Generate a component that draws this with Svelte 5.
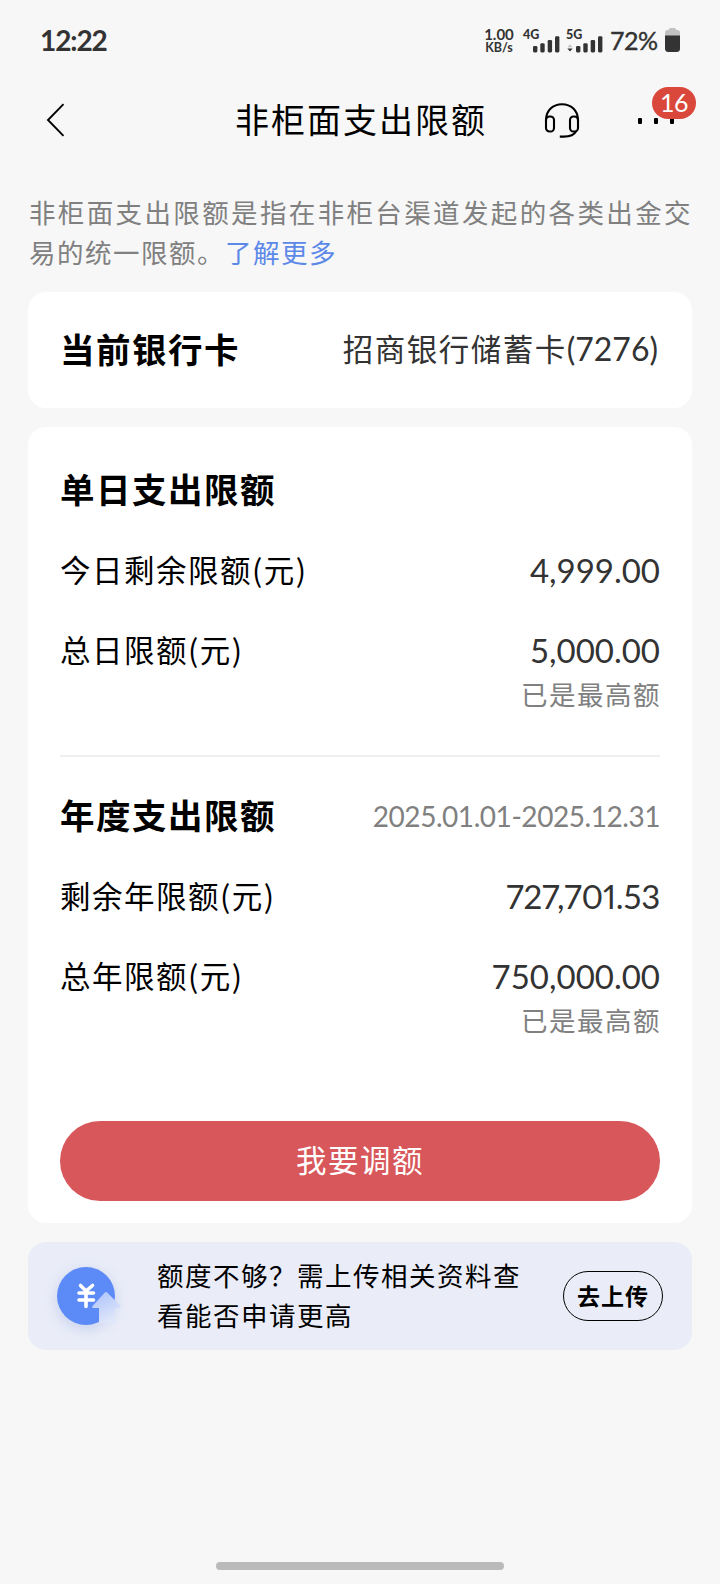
<script lang="ts">
	type Row = { label: string; value: string; note?: string; tight?: boolean };
	type Section = { title: string; period?: string; rows: Row[] };

	const sections: Section[] = [
		{
			title: '单日支出限额',
			rows: [
				{ label: '今日剩余限额(元)', value: '4,999.00' },
				{ label: '总日限额(元)', value: '5,000.00', note: '已是最高额' },
			],
		},
		{
			title: '年度支出限额',
			period: '2025.01.01-2025.12.31',
			rows: [
				{ label: '剩余年限额(元)', value: '727,701.53', tight: true },
				{ label: '总年限额(元)', value: '750,000.00', note: '已是最高额' },
			],
		},
	];

	let unread = $state(16);
</script>

{#snippet bars()}
	<svg class="bars" width="27" height="17" viewBox="0 0 27 17">
		<rect x="0" y="10" width="4.4" height="6.4" rx="1.3" />
		<rect x="7.3" y="7.2" width="4.4" height="9.2" rx="1.3" />
		<rect x="14.7" y="4" width="4.4" height="12.4" rx="1.3" />
		<rect x="22" y="0.3" width="4.4" height="16.1" rx="1.3" />
	</svg>
{/snippet}

<div class="screen">
	<header class="status">
		<span class="time">12:22</span>
		<div class="speed"><span>1.00</span><span class="unit">KB/s</span></div>
		<div class="signal">
			<span>4G</span>
			{@render bars()}
		</div>
		<div class="signal second">
			<span>5G</span>
			<svg class="traffic" width="6" height="8" viewBox="0 0 6 8">
				<path d="M0.4 3.2 3 0.2 5.6 3.2z" fill="#c4c4c4" />
				<path d="M0.4 4.4h5.2L3 7.6z" fill="#333" />
			</svg>
			{@render bars()}
		</div>
		<span class="percent">72%</span>
		<svg class="battery" width="15" height="24" viewBox="0 0 15 24">
			<path d="M0 8V4.500Q0 2 2.500 2H3.500Q4 0 6 0H9Q11 0 11.500 2H12.500Q15 2 15 4.500V8z" fill="#c1c1c1" />
			<path d="M0 7.500H15V20.500Q15 24 11.500 24H3.500Q0 24 0 20.500z" fill="#333" />
		</svg>
	</header>

	<nav>
		<button class="icon" aria-label="返回">
			<svg width="20" height="36" viewBox="0 0 20 36">
				<path d="M17.500 2.200 2 18l15.500 15.800" fill="none" stroke="#000" stroke-width="1.900" />
			</svg>
		</button>
		<h1>非柜面支出限额</h1>
		<button class="icon headset" aria-label="客服">
			<svg width="36" height="36" viewBox="0 0 36 36" fill="none" stroke="#000" stroke-width="2.100">
				<path d="M2 19v-1C2 8.500 9 2.200 18 2.200S34 8.500 34 18v1" />
				<rect x="2" y="14.500" width="8" height="15" rx="3.600" />
				<rect x="26" y="14.500" width="8" height="15" rx="3.600" />
				<path d="M32.200 29c-1.800 3.700-6.500 5.600-12.500 5.600H15.800" />
			</svg>
		</button>
		<button class="icon more" aria-label="更多">
			<i></i><i></i><i></i>
			<span class="badge">{unread}</span>
		</button>
	</nav>

	<main>
		<p class="intro" lang="zh-CN">
			非柜面支出限额是指在非柜台渠道发起的各类出金交易的统一限额。<span class="link">了解更多</span>
		</p>

		<section class="card current">
			<h2>当前银行卡</h2>
			<span class="bank">招商银行储蓄卡<span class="num">(7276)</span></span>
		</section>

		<section class="card limits">
			{#each sections as section}
				<div class="group">
					<div class="row title">
						<h2>{section.title}</h2>
						{#if section.period}
							<span class="period">{section.period}</span>
						{/if}
					</div>
					{#each section.rows as row}
						<div class="row">
							<span class="label">{row.label}</span>
							<span class="value" class:tight={row.tight}>{row.value}</span>
						</div>
						{#if row.note}
							<div class="note">{row.note}</div>
						{/if}
					{/each}
				</div>
			{/each}
			<button class="primary">我要调额</button>
		</section>

		<section class="banner">
			<svg class="coin" width="90" height="90" viewBox="0 0 90 90">
				<defs>
					<linearGradient id="arrow" x1="0" y1="0" x2="0.5" y2="1">
						<stop offset="0" stop-color="#a9c2fc" />
						<stop offset="0.500" stop-color="#c4d3fa" />
						<stop offset="1" stop-color="#e0e7fa" />
					</linearGradient>
					<filter id="glow" x="-40%" y="-40%" width="180%" height="180%">
						<feGaussianBlur stdDeviation="7" />
					</filter>
				</defs>
				<circle cx="45" cy="49" r="30" fill="#8ea5dc" opacity="0.350" filter="url(#glow)" />
				<circle cx="45" cy="45" r="29" fill="#5c8af7" />
				<path
					d="M39.500 34.500 45 40l6.500-5.500M38 42h14.500M38 49h14.500M45 40v15.500"
					fill="none"
					stroke="#fff"
					stroke-width="3.600"
					stroke-linecap="round"
				/>
				<path d="M63.800 41.600Q65 40.400 66.200 41.600L79.500 55Q80.500 57 78.500 57H74V72H58V57H52.500Q50.500 57 51.500 55z" fill="url(#arrow)" />
			</svg>
			<p>额度不够？需上传相关资料查看能否申请更高</p>
			<button class="upload">去上传</button>
		</section>
	</main>

	<div class="home"></div>
</div>

<style>
	:global(body) {
		background: #f7f7f7;
	}

	.screen {
		display: flex;
		flex-direction: column;
		box-sizing: border-box;
		width: 720px;
		height: 1584px;
		background: #f7f7f7;
		color: #000;
		font-family: 'Noto Sans CJK SC', sans-serif;
		overflow: hidden;
	}

	h1,
	h2,
	p {
		margin: 0;
	}

	button {
		border: none;
		background: none;
		padding: 0;
		margin: 0;
		color: inherit;
		font-family: inherit;
	}

	svg {
		display: block;
	}

	.status {
		display: flex;
		align-items: center;
		height: 80px;
		padding: 0 40px;
		box-sizing: border-box;
		color: #333;
		font-family: Lato, sans-serif;
		font-weight: 700;
	}

	.time {
		flex: 1;
		font-size: 28px;
		letter-spacing: -1.1px;
	}

	.speed {
		display: flex;
		flex-direction: column;
		align-items: center;
		width: 32px;
		margin-right: 9px;
		font-size: 15px;
		line-height: 16px;
	}

	.speed .unit {
		font-size: 12.5px;
		line-height: 12px;
	}

	.signal {
		display: flex;
		align-items: flex-end;
		position: relative;
		width: 27px;
		height: 26px;
		margin-left: 9px;
	}

	.signal span {
		position: absolute;
		left: -10px;
		top: 1px;
		font-size: 12.5px;
		font-weight: 900;
		line-height: 14px;
	}

	.signal.second {
		margin-left: 16px;
	}

	.bars {
		flex: none;
		fill: #333;
	}

	.traffic {
		position: absolute;
		left: -9px;
		bottom: 1px;
	}

	.percent {
		margin-left: 7px;
		width: 49px;
		font-size: 25px;
		font-weight: 400;
		letter-spacing: -0.5px;
		white-space: nowrap;
		-webkit-text-stroke: 0.4px #333;
	}

	.battery {
		margin-left: 6px;
	}

	nav {
		display: grid;
		grid-template-columns: 190px 1fr 36px 116px;
		align-items: center;
		height: 80px;
		padding: 0 24px 0 46px;
	}

	h1 {
		font-size: 34px;
		font-weight: 400;
		line-height: 50px;
		letter-spacing: 2px;
		padding-bottom: 3px;
		margin-left: -1px;
		white-space: nowrap;
	}

	.more {
		display: flex;
		position: relative;
		gap: 12.6px;
		padding: 2px 0 0 58px;
	}

	.more i {
		width: 3.6px;
		height: 5.6px;
		background: #000;
		border-radius: 1px;
	}

	.badge {
		position: absolute;
		right: 0;
		bottom: 5px;
		width: 44px;
		height: 32px;
		border-radius: 16px;
		background: #d9483b;
		color: #fff;
		font-family: Lato, sans-serif;
		font-size: 25px;
		letter-spacing: -0.6px;
		line-height: 31px;
		text-align: center;
	}

	main {
		padding: 32px 28px 0;
	}

	.intro {
		height: 100px;
		margin: 0 0 0 1px;
		color: #808080;
		font-size: 26.5px;
		line-height: 40px;
		letter-spacing: 1.5px;
		text-align: justify;
	}

	.link {
		color: #5c89e8;
	}

	.card {
		border-radius: 18px;
		background: #fff;
		padding: 0 32px;
	}

	.current {
		display: flex;
		align-items: center;
		justify-content: space-between;
		height: 112px;
		padding-bottom: 4px;
	}

	h2 {
		font-size: 34.5px;
		font-weight: 700;
		line-height: 50px;
		letter-spacing: 1.5px;
	}

	.bank {
		padding: 1px 2px 0 0;
		color: #333;
		font-size: 30.5px;
		line-height: 50px;
		letter-spacing: 1.5px;
	}

	.num {
		font-family: Lato, sans-serif;
		font-size: 32px;
		letter-spacing: 0;
	}

	.limits {
		margin-top: 19px;
		height: 796px;
	}

	.group {
		padding-top: 21px;
		height: 307px;
	}

	.group + .group {
		margin: 0;
		padding-top: 17px;
		height: 347px;
		border-top: 2px solid #efefef;
	}

	.row {
		display: flex;
		align-items: center;
		justify-content: space-between;
		height: 80px;
	}

	.label {
		padding-top: 1px;
		font-size: 30.5px;
		line-height: 50px;
		letter-spacing: 1.5px;
	}

	.value {
		padding-top: 3px;
		color: #333;
		font-family: Lato, sans-serif;
		font-size: 33px;
		line-height: 50px;
	}

	.value.tight {
		font-variant-numeric: proportional-nums;
		letter-spacing: -0.2px;
	}

	.period {
		padding-top: 3px;
		color: #808080;
		font-family: Lato, sans-serif;
		font-size: 28px;
		letter-spacing: -0.45px;
		line-height: 50px;
	}

	.note {
		margin: -14px -1px 0 0;
		color: #808080;
		font-size: 26.5px;
		line-height: 40px;
		letter-spacing: 1.5px;
		text-align: right;
	}

	.primary {
		display: block;
		width: 600px;
		height: 80px;
		padding-bottom: 4px;
		border-radius: 40px;
		background: #d7575b;
		color: #fff;
		font-size: 30.5px;
		letter-spacing: 1.5px;
	}

	.banner {
		display: flex;
		align-items: center;
		height: 108px;
		margin-top: 19px;
		padding: 0 29px 0 13px;
		border-radius: 18px;
		background: #eaedf8;
	}

	.coin {
		flex: none;
	}

	.banner p {
		flex: none;
		width: 368px;
		margin-left: 26px;
		padding-bottom: 3px;
		font-size: 26.5px;
		line-height: 40px;
		letter-spacing: 1.5px;
	}

	.upload {
		flex: none;
		box-sizing: border-box;
		width: 100px;
		height: 50px;
		margin-left: auto;
		padding-bottom: 2px;
		border: 1.4px solid #000;
		border-radius: 25px;
		font-size: 23px;
		font-weight: 700;
		letter-spacing: 1px;
	}

	.home {
		width: 288px;
		height: 8px;
		margin: auto auto 14px;
		border-radius: 4px;
		background: #bababa;
	}
</style>
